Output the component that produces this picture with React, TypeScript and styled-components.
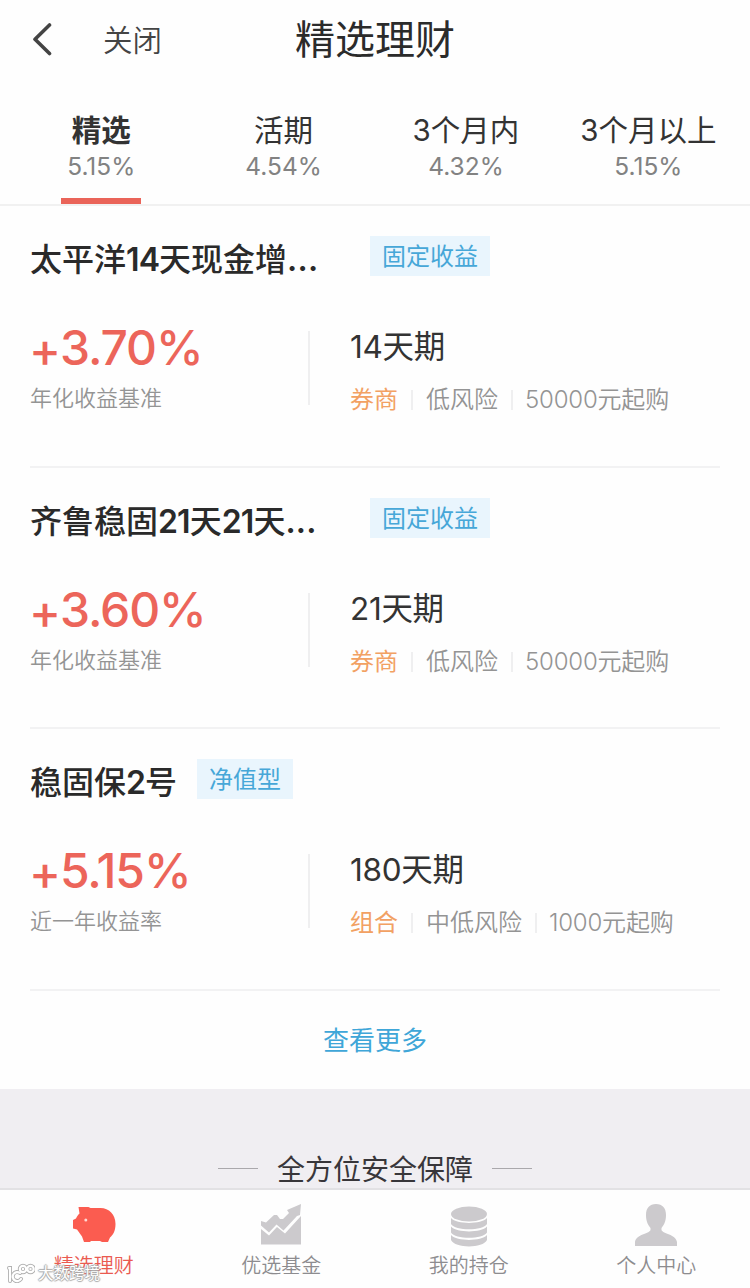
import React from 'react';
import styled, { createGlobalStyle } from 'styled-components';

const GlobalStyle = createGlobalStyle`
  * { box-sizing: border-box; }
  body {
    margin: 0;
    background: #fefefe;
    font-family: Inter, 'Noto Sans CJK SC', sans-serif;
    color: #333;
  }
`;

const Page = styled.div`
  width: 750px;
  height: 1288px;
  overflow: hidden;
  display: flex;
  flex-direction: column;
`;

const Header = styled.header`
  height: 80px;
  display: grid;
  grid-template-columns: 250px 250px 250px;
  align-items: center;
  flex: none;
`;

const HeaderLeft = styled.div`
  display: flex;
  align-items: center;
  padding-left: 31px;
`;

const CloseText = styled.span`
  margin: 0 0 0 51px;
  font-size: 29.5px;
  font-weight: 350;
  line-height: 40px;
  color: #444;
`;

const Title = styled.h1`
  margin: 0;
  padding-bottom: 1px;
  font-size: 40px;
  font-weight: 400;
  line-height: 60px;
  text-align: center;
  white-space: nowrap;
  color: #2b2b2b;
`;

const Tabs = styled.nav`
  height: 126px;
  flex: none;
  display: grid;
  grid-template-columns: repeat(4, 182.4px);
  padding-left: 10px;
  border-bottom: 2px solid #f1f1f1;
`;

const Tab = styled.div`
  display: flex;
  flex-direction: column;
  align-items: center;
  padding-top: 30px;
  white-space: nowrap;
`;

const TabName = styled.span<{ $active?: boolean }>`
  font-size: 29.5px;
  line-height: 40px;
  font-weight: ${p => (p.$active ? 700 : 400)};
  color: #333;
`;

const TabRate = styled.span`
  font-size: 24.5px;
  font-weight: 400;
  line-height: 32px;
  color: #828282;
`;

const Underline = styled.i`
  width: 80px;
  height: 6px;
  margin-top: 16px;
  background: #ea6459;
`;

const List = styled.main`
  flex: none;
  padding: 0 30px;
`;

const Product = styled.section`
  height: 261.7px;
  padding-top: 30px;
  border-bottom: 2px solid #f2f2f3;
`;

const ProductHead = styled.div`
  height: 40px;
  display: flex;
  align-items: center;
`;

const Name = styled.h2<{ $long?: boolean }>`
  margin: 8px 20px 0 0;
  width: ${p => (p.$long ? '320px' : 'auto')};
  font-size: 32px;
  font-weight: 500;
  line-height: 40px;
  white-space: nowrap;
  color: #2a2a2a;
`;

const Digits = styled.span`
  font-weight: 600;
  letter-spacing: -0.9px;
`;

const Dots = styled.span`
  font-weight: 600;
  letter-spacing: 0.2px;
`;

const Tag = styled.span`
  height: 40px;
  padding: 0 12px;
  background: #e9f5fd;
  color: #46a7d8;
  font-size: 24px;
  line-height: 41px;
`;

const ProductBody = styled.div`
  display: flex;
  margin-top: 50px;
`;

const Yield = styled.div`
  width: 280px;
  height: 86px;
  display: flex;
  flex-direction: column;
`;

const Rate = styled.strong`
  height: 48px;
  margin: -2px 0 0 -1px;
  font-size: 48px;
  font-weight: 550;
  line-height: 48px;
  letter-spacing: -1.1px;
  font-feature-settings: 'calt' 0;
  color: #ec655a;
`;

const Sign = styled.span`
  line-height: 1;
  vertical-align: -2px;
`;

const Caption = styled.span`
  margin-top: 11px;
  font-size: 22px;
  font-weight: 350;
  line-height: 30px;
  color: #949494;
`;

const Detail = styled.div`
  height: 74px;
  margin: 5px 0 0 -2px;
  padding-left: 40px;
  border-left: 2px solid #efeff0;
`;

const Term = styled.div`
  font-size: 31.5px;
  line-height: 40px;
  margin-top: -4px;
  letter-spacing: -0.3px;
  color: #333;
`;

const Meta = styled.div`
  display: flex;
  align-items: center;
  margin-top: 17px;
  font-size: 24px;
  font-weight: 350;
  line-height: 32px;
  white-space: nowrap;
  color: #949494;
`;

const Kind = styled.span`
  font-weight: 400;
  color: #f2a163;
`;

const Amount = styled.span`
  margin-left: -1px;
  letter-spacing: -0.2px;
`;

const Separator = styled.i`
  width: 2px;
  height: 20px;
  margin: 0 13px;
  background: #efeff0;
`;

const More = styled.a`
  height: 97.900px;
  flex: none;
  font-size: 26px;
  line-height: 100px;
  text-align: center;
  color: #3fa6d8;
`;

const Safety = styled.section`
  flex: 1;
  display: flex;
  justify-content: center;
  align-items: flex-start;
  padding-top: 61px;
  background: #f0eef2;
`;

const SafetyTitle = styled.h3`
  margin: 0 19px;
  font-size: 28px;
  font-weight: 400;
  line-height: 40px;
  height: 36px;
  color: #38363a;
`;

const Rule = styled.i`
  width: 40px;
  height: 1px;
  margin-top: 18px;
  background: #aaa8ac;
`;

const TabBar = styled.footer`
  position: relative;
  height: 100px;
  flex: none;
  display: grid;
  grid-template-columns: repeat(4, 1fr);
  border-top: 2px solid #e2e1e4;
  background: #fefefe;
`;

const BarItem = styled.div<{ $active?: boolean }>`
  display: flex;
  flex-direction: column;
  align-items: center;
  padding-top: 11px;
  color: ${p => (p.$active ? '#fb5c50' : '#cccacd')};
  span {
    margin-top: 1px;
    font-size: 20px;
    font-weight: 350;
    line-height: 28px;
    color: ${p => (p.$active ? '#ea5a50' : '#8d8c8f')};
  }
`;

const Watermark = styled.div`
  position: absolute;
  left: 7px;
  bottom: 2px;
  display: flex;
  align-items: center;
  gap: 3px;
  font-size: 15.500px;
  line-height: 24px;
  color: #fff;
  text-shadow: 1px 0 1px #aaa, -1px 0 1px #aaa, 0 1px 1px #aaa, 0 -1px 1px #aaa;
`;

const products = [
  { name: ['太平洋', '14', '天现金增'], long: true, tag: '固定收益', rate: '3.70%', caption: '年化收益基准', term: '14天期', meta: ['券商', '低风险', '50000元起购'] },
  { name: ['齐鲁稳固', '21', '天', '21', '天'], long: true, tag: '固定收益', rate: '3.60%', caption: '年化收益基准', term: '21天期', meta: ['券商', '低风险', '50000元起购'] },
  { name: ['稳固保', '2', '号'], long: false, tag: '净值型', rate: '5.15%', caption: '近一年收益率', term: '180天期', meta: ['组合', '中低风险', '1000元起购'] },
];

const tabs = [
  ['精选', '5.15%'],
  ['活期', '4.54%'],
  ['3个月内', '4.32%'],
  ['3个月以上', '5.15%'],
];

const PigIcon = () => (
  <svg width="48" height="50" viewBox="0 0 48 50" fill="currentColor">
    <path d="M8.500 6h10l2 1h10c8.500 0 15 6.500 15 16 0 7-2.500 11-5.500 13.500l-2 4.500h-6l-2-1h-9l-1 1h-6l-2-5.500-5-7-4-1v-8.500l3-1.500c1-2.500 2-3.500 3.500-5z" />
    <circle cx="15.800" cy="19" r="1.500" fill="#ffd9d4" />
  </svg>
);

const ChartIcon = () => (
  <svg width="48" height="50" viewBox="0 0 48 50" fill="currentColor">
    <path d="M4 20l5 1.500 8-7.500h3l3 4h3l6-6-2-3L44 3l-1 11-3 1-13.500 14.500-7-6-7.500 8-8-7z" />
    <path d="M4 28l8 6.500 8-8.500 8 6.500 16-17.500v28.500H4z" />
  </svg>
);

const CoinsIcon = () => (
  <svg width="48" height="50" viewBox="0 0 48 50" fill="currentColor">
    <ellipse cx="24" cy="13" rx="18" ry="7.500" />
    <path d="M6 17c6 6.500 30 6.500 36 0v6c-4 7-32 7-36 0z" />
    <path d="M6 25.500c6 6.500 30 6.500 36 0v6c-4 7-32 7-36 0z" />
    <path d="M6 34c6 6.500 30 6.500 36 0v5c-4 8.500-32 8.500-36 0z" />
  </svg>
);

const PersonIcon = () => (
  <svg width="48" height="50" viewBox="0 0 48 50" fill="currentColor">
    <path d="M24 3c6.500 0 10 4 10 11 0 6-2 10-4.500 13v2c1.500 4 14 4 15.500 12v4H3v-4c1.500-8 14-8 15.500-12v-2C16 24 14 20 14 14c0-7 3.500-11 10-11z" />
  </svg>
);

const BAR = [
  { label: '精选理财', icon: <PigIcon /> },
  { label: '优选基金', icon: <ChartIcon /> },
  { label: '我的持仓', icon: <CoinsIcon /> },
  { label: '个人中心', icon: <PersonIcon /> },
];

export default function App() {
  return (
    <Page>
      <GlobalStyle />
      <Header>
        <HeaderLeft>
          <svg width="21" height="34" viewBox="0 0 21 34" fill="none" stroke="#444" strokeWidth="3.6" strokeLinecap="round" strokeLinejoin="round">
            <path d="M18.500 2L4 16.200l14.500 14.300" />
          </svg>
          <CloseText>关闭</CloseText>
        </HeaderLeft>
        <Title>精选理财</Title>
      </Header>
      <Tabs>
        {tabs.map(([name, rate], i) => (
          <Tab key={name}>
            <TabName $active={i === 0}>{name}</TabName>
            <TabRate>{rate}</TabRate>
            {i === 0 && <Underline />}
          </Tab>
        ))}
      </Tabs>
      <List>
        {products.map(p => (
          <Product key={p.rate}>
            <ProductHead>
              <Name $long={p.long}>
                {p.name.map((part, i) => (i % 2 ? <Digits key={i}>{part}</Digits> : part))}
                {p.long && <Dots>...</Dots>}
              </Name>
              <Tag>{p.tag}</Tag>
            </ProductHead>
            <ProductBody>
              <Yield>
                <Rate><Sign>+</Sign>{p.rate}</Rate>
                <Caption>{p.caption}</Caption>
              </Yield>
              <Detail>
                <Term>{p.term}</Term>
                <Meta>
                  <Kind>{p.meta[0]}</Kind>
                  <Separator />
                  {p.meta[1]}
                  <Separator />
                  <Amount>{p.meta[2]}</Amount>
                </Meta>
              </Detail>
            </ProductBody>
          </Product>
        ))}
      </List>
      <More>查看更多</More>
      <Safety>
        <Rule />
        <SafetyTitle>全方位安全保障</SafetyTitle>
        <Rule />
      </Safety>
      <TabBar>
        {BAR.map((item, i) => (
          <BarItem key={item.label} $active={i === 0}>
            {item.icon}
            <span>{item.label}</span>
          </BarItem>
        ))}
        <Watermark>
          <svg width="28" height="22" viewBox="0 0 28 22" fill="none" strokeLinecap="round">
            <g stroke="#b0b0b0" strokeWidth="4">
              <path d="M2 5h1v13M13 10a4.500 4.500 0 1 0 1 6" />
              <circle cx="16" cy="6" r="3.200" />
              <circle cx="23.500" cy="6" r="3.200" />
            </g>
            <g stroke="#fff" strokeWidth="2.200">
              <path d="M2 5h1v13M13 10a4.500 4.500 0 1 0 1 6" />
              <circle cx="16" cy="6" r="3.200" />
              <circle cx="23.500" cy="6" r="3.200" />
            </g>
          </svg>
          大数跨境
        </Watermark>
      </TabBar>
    </Page>
  );
}
